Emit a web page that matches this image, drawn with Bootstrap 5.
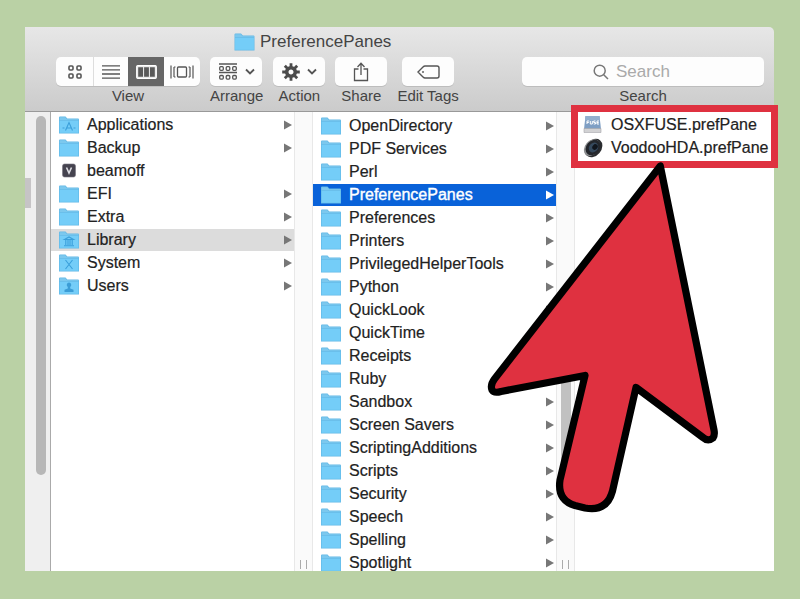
<!DOCTYPE html>
<html lang="en">
<head>
<meta charset="utf-8">
<meta name="viewport" content="width=device-width, initial-scale=1">
<title>PreferencePanes</title>
<link rel="stylesheet" href="https://cdn.jsdelivr.net/npm/bootstrap@5.3.0/dist/css/bootstrap.min.css">
<style>
body { background: #bad1a5; font-family: "Liberation Sans", Arial, sans-serif; font-size: 16px; color: #222; padding: 27px 26px 28px 25px; height: 100vh; overflow: hidden; }
.toolbar-area { background: linear-gradient(#e7e7e7, #cbcbcb); border-bottom: 1px solid #999; border-top-right-radius: 5px; height: 85px; color: #444; }
.title-line { height: 30px; padding-left: 209px; font-size: 17px; gap: 5px; }
.tools { padding: 0 10px 0 31px; gap: 10px; }
.tool { font-size: 15px; line-height: 20px; text-align: center; }
.tool-btn { background: #fdfdfd; border: 0; border-radius: 5px; height: 29px; padding: 0; width: 52px; box-shadow: 0 1px 0 #bdbdbd; color: #555; display: flex; align-items: center; justify-content: center; gap: 7px; }
.seg .tool-btn { width: 36px; border-radius: 0; }
.seg .tool-btn:first-child { width: 38px; border-radius: 5px 0 0 5px; border-right: 1px solid #ddd; }
.seg .tool-btn:nth-child(2) { width: 34px; }
.seg .tool-btn:last-child { border-radius: 0 5px 5px 0; }
.seg .tool-btn.chosen { background: #666; color: #fff; }
.search-tool { width: 242px; }
.search-box { background: #fdfdfd; border-radius: 5px; height: 29px; box-shadow: 0 1px 0 #bdbdbd; gap: 7px; color: #777; }
.search-box input { border: 0; background: none; outline: 0; padding: 0; width: 77px; font-size: 17px; color: #444; }
.search-box input::placeholder { color: #aaa; opacity: 1; }
.sidebar-strip { width: 26px; background: #efefef; border-right: 1px solid #aaa; padding-top: 4px; }
.strip-mark { width: 6px; height: 30px; background: #c6c4c6; margin-top: 62px; }
.strip-thumb { width: 10px; height: 359px; border-radius: 5px; background: #b7b7b7; margin-left: 5px; }
.file-col { width: 243px; background: #fff; overflow: hidden; padding-top: 2px; }
.file-col.middle { padding-top: 3px; }
.entry { display: flex; align-items: center; flex-shrink: 0; gap: 8px; height: 22px; margin-bottom: 1px; padding: 0 2px 0 8px; color: #222; text-decoration: none; white-space: nowrap; -webkit-text-stroke: 0.2px currentColor; }
.entry svg { flex-shrink: 0; }
.entry .go { margin-left: auto; width: 8px; height: 10px; fill: #777; margin-bottom: 1px; }
.entry.open-grey { background: #dcdcdc; }
.entry.open-blue { background: #0962d9; color: #fff; -webkit-text-stroke: 0.4px #fff; }
.entry.open-blue .go { fill: #fff; }
.folder { width: 20px; height: 18px; }
.folder-mark { fill: none; stroke: #3a9fda; stroke-width: 1.1; }
.gutter { width: 19px; background: #fafafa; border: solid #e8e8e8; border-width: 0 1px; padding: 0 4px 2px; }
.grip { width: 7px; height: 9px; border: solid #aaa; border-width: 0 1px; margin-left: 1px; }
.gutter-thumb { width: 10px; height: 160px; margin-top: 208px; border-radius: 5px; background: #c1c1c1; }
.last-col { background: #fff; padding-top: 2px; min-width: 0; }
.callout { top: -7px; left: -4px; right: -4px; height: 63px; border: 7px solid #df3140; pointer-events: none; }
.pointer { left: -91px; top: 48px; width: 240px; height: 360px; pointer-events: none; }
</style>
</head>
<body class="d-flex flex-column">
<svg class="d-none" aria-hidden="true">
  <symbol id="folder" viewBox="0 0 20 18"><path d="M0 1.500Q0 .5 1 .5H6.500L8.300 2.500H19q1 0 1 1V17.500H0z" fill="#62b8e6"/><path d="M.6 1.200H6.300L8 3.200H19.400V4.200H.6z" fill="#7cc8ee"/><path d="M.6 4.800H19.400V16.800H.6z" fill="#74cdf8"/></symbol>
  <symbol id="go" viewBox="0 0 8 10"><path d="M0 .5L8 5 0 9.500z"/></symbol>
  <symbol id="chev" viewBox="0 0 10 7"><path d="M1 1.500l4 4 4-4" fill="none" stroke="#555" stroke-width="1.800"/></symbol>
</svg>

<header class="toolbar-area flex-shrink-0">
  <div class="title-line d-flex align-items-center">
    <svg width="21" height="18"><use href="#folder"/></svg><span>PreferencePanes</span>
  </div>
  <div class="tools d-flex align-items-start">
    <div class="tool">
      <div class="seg d-flex" role="group" aria-label="View">
        <button type="button" class="tool-btn" aria-label="Icons"><svg width="14" height="14" fill="none" stroke="currentColor" stroke-width="1.600"><rect x="1" y="1" width="4" height="4" rx="1"/><rect x="9" y="1" width="4" height="4" rx="1"/><rect x="1" y="9" width="4" height="4" rx="1"/><rect x="9" y="9" width="4" height="4" rx="1"/></svg></button>
        <button type="button" class="tool-btn" aria-label="List"><svg width="18" height="14" stroke="currentColor" stroke-width="1.300"><path d="M0 .8H18M0 4.900H18M0 9H18M0 13.100H18"/></svg></button>
        <button type="button" class="tool-btn chosen" aria-label="Columns"><svg width="21" height="14"><rect x=".7" y=".7" width="19.600" height="12.600" rx="1" fill="#e4e4e4" stroke="#fff" stroke-width="1.200"/><path d="M2.200 2.200H7V11.800H2.200zM8.100 2.200h4.800V11.800H8.100zM14 2.200h4.800V11.800H14z" fill="#5a5a5a"/></svg></button>
        <button type="button" class="tool-btn" aria-label="Cover Flow"><svg width="24" height="14" fill="none" stroke="currentColor" stroke-width="1.300"><rect x="7.500" y="2" width="9" height="10" rx="1"/><path d="M1 .5v13M23 .5v13M4 2v10M20 2v10M5.500 2H4M5.500 12H4M18.500 2H20M18.500 12H20" stroke-width="1.200"/></svg></button>
      </div>
      <div>View</div>
    </div>
    <div class="tool">
      <button type="button" class="tool-btn" aria-labelledby="l-arr"><svg width="20" height="18" fill="none" stroke="#555" stroke-width="1.300"><path d="M1 1H19M1 9.500H19"/><rect x="1.700" y="3.700" width="3.600" height="3.600" rx="1"/><rect x="8.200" y="3.700" width="3.600" height="3.600" rx="1"/><rect x="14.700" y="3.700" width="3.600" height="3.600" rx="1"/><rect x="1.700" y="12.500" width="3.600" height="3.600" rx="1"/><rect x="8.200" y="12.500" width="3.600" height="3.600" rx="1"/><rect x="14.700" y="12.500" width="3.600" height="3.600" rx="1"/></svg><svg width="10" height="7"><use href="#chev"/></svg></button>
      <div id="l-arr">Arrange</div>
    </div>
    <div class="tool">
      <button type="button" class="tool-btn" aria-labelledby="l-act"><svg width="18" height="18" viewBox="-9 -9 18 18"><g stroke="#4b4b4b" stroke-width="2.800"><path d="M0-8.800V8.800M-8.800 0H8.800M-6.200-6.200L6.200 6.200M-6.200 6.200L6.200-6.200"/></g><circle r="4.300" fill="#fdfdfd" stroke="#4b4b4b" stroke-width="3.600"/></svg><svg width="10" height="7"><use href="#chev"/></svg></button>
      <div id="l-act">Action</div>
    </div>
    <div class="tool">
      <button type="button" class="tool-btn" aria-labelledby="l-sh"><svg width="16" height="20" fill="none" stroke="#555" stroke-width="1.300"><path d="M5.500 7H1.500V18.500H14.500V7H10.500M8 13V1.500M4.500 5L8 1.300 11.500 5"/></svg></button>
      <div id="l-sh">Share</div>
    </div>
    <div class="tool">
      <button type="button" class="tool-btn mx-auto" aria-labelledby="l-tag"><svg width="23" height="14" fill="none" stroke="#555" stroke-width="1.400"><path d="M1 7l5-5q1-1 2-1H20q2 0 2 2V11q0 2-2 2H8q-1 0-2-1z"/><circle cx="6" cy="7" r=".7" fill="#555" stroke-width=".6"/></svg></button>
      <div id="l-tag">Edit Tags</div>
    </div>
    <div class="tool search-tool ms-auto">
      <div class="search-box d-flex align-items-center justify-content-center">
        <svg width="16" height="16" fill="none" stroke="currentColor" stroke-width="1.500"><circle cx="6.700" cy="6.700" r="5.500"/><path d="M10.700 10.700L15 15"/></svg>
        <input type="text" id="find" placeholder="Search">
      </div>
      <label for="find">Search</label>
    </div>
  </div>
</header>

<main class="d-flex flex-grow-1 position-relative" style="min-height:0">
  <div class="sidebar-strip d-flex align-items-start flex-shrink-0"><div class="strip-mark"></div><div class="strip-thumb"></div></div>

  <nav class="file-col d-flex flex-column flex-shrink-0" aria-label="Disk">
    <a href="#" class="entry"><svg class="folder"><use href="#folder"/><path class="folder-mark" d="M6.500 14.500L10 6.500l3.500 8M3.500 12h2M7.500 12h5M14.500 12h2"/></svg>Applications<svg class="go"><use href="#go"/></svg></a>
    <a href="#" class="entry"><svg class="folder"><use href="#folder"/></svg>Backup<svg class="go"><use href="#go"/></svg></a>
    <a href="#" class="entry"><svg class="folder"><rect x="3.500" y="2" width="13" height="13" rx="2" fill="#45434f" stroke="#77747f" stroke-width=".6"/><path d="M7.500 5.500L10 11l2.500-5.500" fill="none" stroke="#dcdce2" stroke-width="1.600"/></svg>beamoff</a>
    <a href="#" class="entry"><svg class="folder"><use href="#folder"/></svg>EFI<svg class="go"><use href="#go"/></svg></a>
    <a href="#" class="entry"><svg class="folder"><use href="#folder"/></svg>Extra<svg class="go"><use href="#go"/></svg></a>
    <a href="#" class="entry open-grey"><svg class="folder"><use href="#folder"/><path class="folder-mark" d="M5.500 8.500L10 6l4.500 2.500zM5 14.700H15M6.800 9v5M9 9v5M11 9v5M13.200 9v5"/></svg>Library<svg class="go"><use href="#go"/></svg></a>
    <a href="#" class="entry"><svg class="folder"><use href="#folder"/><path class="folder-mark" d="M6.500 6l7 9M13.500 6l-7 9"/></svg>System<svg class="go"><use href="#go"/></svg></a>
    <a href="#" class="entry"><svg class="folder"><use href="#folder"/><path d="M10 5.500a2.300 2.500 0 0 1 1.200 4.600v1.400l3.300 1.200V15h-9v-2.300l3.300-1.200v-1.400A2.300 2.500 0 0 1 10 5.500z" fill="#3c9dd6"/></svg>Users<svg class="go"><use href="#go"/></svg></a>
  </nav>

  <div class="gutter d-flex flex-column justify-content-end flex-shrink-0"><div class="grip"></div></div>

  <nav class="file-col middle d-flex flex-column flex-shrink-0" aria-label="Library">
    <a href="#" class="entry"><svg class="folder"><use href="#folder"/></svg>OpenDirectory<svg class="go"><use href="#go"/></svg></a>
    <a href="#" class="entry"><svg class="folder"><use href="#folder"/></svg>PDF Services<svg class="go"><use href="#go"/></svg></a>
    <a href="#" class="entry"><svg class="folder"><use href="#folder"/></svg>Perl<svg class="go"><use href="#go"/></svg></a>
    <a href="#" class="entry open-blue"><svg class="folder"><use href="#folder"/></svg>PreferencePanes<svg class="go"><use href="#go"/></svg></a>
    <a href="#" class="entry"><svg class="folder"><use href="#folder"/></svg>Preferences<svg class="go"><use href="#go"/></svg></a>
    <a href="#" class="entry"><svg class="folder"><use href="#folder"/></svg>Printers<svg class="go"><use href="#go"/></svg></a>
    <a href="#" class="entry"><svg class="folder"><use href="#folder"/></svg>PrivilegedHelperTools<svg class="go"><use href="#go"/></svg></a>
    <a href="#" class="entry"><svg class="folder"><use href="#folder"/></svg>Python<svg class="go"><use href="#go"/></svg></a>
    <a href="#" class="entry"><svg class="folder"><use href="#folder"/></svg>QuickLook<svg class="go"><use href="#go"/></svg></a>
    <a href="#" class="entry"><svg class="folder"><use href="#folder"/></svg>QuickTime<svg class="go"><use href="#go"/></svg></a>
    <a href="#" class="entry"><svg class="folder"><use href="#folder"/></svg>Receipts<svg class="go"><use href="#go"/></svg></a>
    <a href="#" class="entry"><svg class="folder"><use href="#folder"/></svg>Ruby<svg class="go"><use href="#go"/></svg></a>
    <a href="#" class="entry"><svg class="folder"><use href="#folder"/></svg>Sandbox<svg class="go"><use href="#go"/></svg></a>
    <a href="#" class="entry"><svg class="folder"><use href="#folder"/></svg>Screen Savers<svg class="go"><use href="#go"/></svg></a>
    <a href="#" class="entry"><svg class="folder"><use href="#folder"/></svg>ScriptingAdditions<svg class="go"><use href="#go"/></svg></a>
    <a href="#" class="entry"><svg class="folder"><use href="#folder"/></svg>Scripts<svg class="go"><use href="#go"/></svg></a>
    <a href="#" class="entry"><svg class="folder"><use href="#folder"/></svg>Security<svg class="go"><use href="#go"/></svg></a>
    <a href="#" class="entry"><svg class="folder"><use href="#folder"/></svg>Speech<svg class="go"><use href="#go"/></svg></a>
    <a href="#" class="entry"><svg class="folder"><use href="#folder"/></svg>Spelling<svg class="go"><use href="#go"/></svg></a>
    <a href="#" class="entry"><svg class="folder"><use href="#folder"/></svg>Spotlight<svg class="go"><use href="#go"/></svg></a>
  </nav>

  <div class="gutter d-flex flex-column justify-content-between flex-shrink-0"><div class="gutter-thumb"></div><div class="grip"></div></div>

  <section class="last-col flex-grow-1 position-relative" aria-label="PreferencePanes">
    <a href="#" class="entry"><svg width="20" height="20"><path d="M2.500 1H16.500L18 14H1z" fill="#7f9fc4"/><path d="M2.500 1H16.500L17 5.500H2z" fill="#93afce"/><path d="M1 13.500H18V17.500H1z" fill="#d2d2d4" stroke="#a5a5aa" stroke-width=".6"/><path d="M4 9V6h2.200M4 7.500h1.800M7.300 6v3h2V6M12.500 6h-1.800v1.500h1.800V9h-1.800M16 6h-2v3h2M14 7.500h1.700" fill="none" stroke="#fff" stroke-width="1"/></svg>OSXFUSE.prefPane</a>
    <a href="#" class="entry"><svg width="20" height="20"><ellipse cx="10.500" cy="10" rx="10.200" ry="7.800" transform="rotate(-50 10.500 10)" fill="#2b2d30"/><ellipse cx="8.800" cy="9.600" rx="9.300" ry="6.800" transform="rotate(-50 8.800 9.600)" fill="#8c8e90"/><ellipse cx="10" cy="9.500" rx="8.400" ry="6.600" transform="rotate(-50 10 9.500)" fill="#24272c"/><ellipse cx="10.500" cy="9.500" rx="5.300" ry="4.400" transform="rotate(-50 10.500 9.500)" fill="#35495d"/><ellipse cx="12" cy="9" rx="3" ry="2.500" transform="rotate(-50 12 9)" fill="#11161d"/></svg>VoodooHDA.prefPane</a>
    <div class="callout position-absolute"></div>
    <svg class="pointer position-absolute" viewBox="484 160 240 360" aria-hidden="true"><path d="M660.300 166L494.500 379Q490 385 492 390Q494 393.500 501 391.500L585 375.500L560 480Q557 500 575 505.500L585 508Q607 512 612.500 491L636 387.500L703 437.500Q708 442 713 438Q715 435 714 430Z" fill="#df3140" stroke="#000" stroke-width="7.200" stroke-linejoin="round"/></svg>
  </section>
</main>
<script src="https://cdn.jsdelivr.net/npm/bootstrap@5.3.0/dist/js/bootstrap.bundle.min.js"></script>
</body>
</html>
